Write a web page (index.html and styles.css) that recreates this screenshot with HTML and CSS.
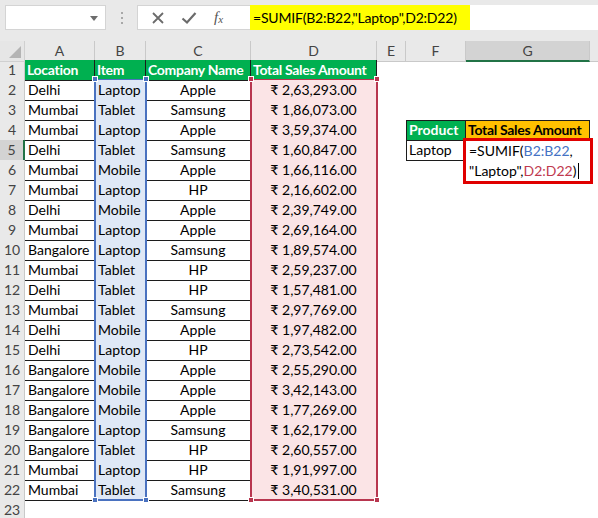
FILE: index.html
```html
<!DOCTYPE html>
<html>
<head>
<meta charset="utf-8">
<link rel="stylesheet" href="styles.css">
</head>
<body>
<div class="app">
  <div class="toolbar">
    <div class="namebox"><span class="dd"></span></div>
    <div class="dots"><i></i><i></i><i></i></div>
    <div class="fxbox">
      <svg class="ico" width="14" height="14" viewBox="0 0 14 14"><path d="M2 2 L12 12 M12 2 L2 12" stroke="#6b6b6b" stroke-width="1.8" fill="none"/></svg>
      <svg class="ico" width="16" height="14" viewBox="0 0 16 14"><path d="M1.5 7.5 L6 11.5 L14.5 2" stroke="#6b6b6b" stroke-width="2.2" fill="none"/></svg>
      <span class="fx">f<sub>x</sub></span>
    </div>
    <div class="formula">=SUMIF(B2:B22,"Laptop",D2:D22)</div>
    <div class="fill"></div>
  </div>

  <div class="sheet">
    <div class="row hdr">
      <div class="corner"><span class="tri"></span></div>
      <div class="ch">A</div><div class="ch">B</div><div class="ch">C</div><div class="ch">D</div><div class="ch">E</div><div class="ch">F</div><div class="ch sel">G</div><div class="ch last"></div>
    </div>
    <div class="row"><div class="rh">1</div><div class="c th">Location</div><div class="c th">Item</div><div class="c th">Company Name</div><div class="c th">Total Sales Amount</div><div class="e"></div><div class="e"></div><div class="e"></div><div class="e"></div></div>
    <div class="row"><div class="rh">2</div><div class="c">Delhi</div><div class="c b">Laptop</div><div class="c m">Apple</div><div class="c d">₹ 2,63,293.00</div><div class="e"></div><div class="e"></div><div class="e"></div><div class="e"></div></div>
    <div class="row"><div class="rh">3</div><div class="c">Mumbai</div><div class="c b">Tablet</div><div class="c m">Samsung</div><div class="c d">₹ 1,86,073.00</div><div class="e"></div><div class="e"></div><div class="e"></div><div class="e"></div></div>
    <div class="row"><div class="rh">4</div><div class="c">Mumbai</div><div class="c b">Laptop</div><div class="c m">Apple</div><div class="c d">₹ 3,59,374.00</div><div class="e"></div><div class="p pg">Product</div><div class="p po">Total Sales Amount</div><div class="e"></div></div>
    <div class="row"><div class="rh rsel">5</div><div class="c">Delhi</div><div class="c b">Tablet</div><div class="c m">Samsung</div><div class="c d">₹ 1,60,847.00</div><div class="e"></div><div class="p pv">Laptop</div><div class="p pv"></div><div class="e"></div></div>
    <div class="row"><div class="rh">6</div><div class="c">Mumbai</div><div class="c b">Mobile</div><div class="c m">Apple</div><div class="c d">₹ 1,66,116.00</div><div class="e"></div><div class="e"></div><div class="e"></div><div class="e"></div></div>
    <div class="row"><div class="rh">7</div><div class="c">Mumbai</div><div class="c b">Laptop</div><div class="c m">HP</div><div class="c d">₹ 2,16,602.00</div><div class="e"></div><div class="e"></div><div class="e"></div><div class="e"></div></div>
    <div class="row"><div class="rh">8</div><div class="c">Delhi</div><div class="c b">Mobile</div><div class="c m">Apple</div><div class="c d">₹ 2,39,749.00</div><div class="e"></div><div class="e"></div><div class="e"></div><div class="e"></div></div>
    <div class="row"><div class="rh">9</div><div class="c">Mumbai</div><div class="c b">Laptop</div><div class="c m">Apple</div><div class="c d">₹ 2,69,164.00</div><div class="e"></div><div class="e"></div><div class="e"></div><div class="e"></div></div>
    <div class="row"><div class="rh">10</div><div class="c">Bangalore</div><div class="c b">Laptop</div><div class="c m">Samsung</div><div class="c d">₹ 1,89,574.00</div><div class="e"></div><div class="e"></div><div class="e"></div><div class="e"></div></div>
    <div class="row"><div class="rh">11</div><div class="c">Mumbai</div><div class="c b">Tablet</div><div class="c m">HP</div><div class="c d">₹ 2,59,237.00</div><div class="e"></div><div class="e"></div><div class="e"></div><div class="e"></div></div>
    <div class="row"><div class="rh">12</div><div class="c">Delhi</div><div class="c b">Tablet</div><div class="c m">HP</div><div class="c d">₹ 1,57,481.00</div><div class="e"></div><div class="e"></div><div class="e"></div><div class="e"></div></div>
    <div class="row"><div class="rh">13</div><div class="c">Mumbai</div><div class="c b">Tablet</div><div class="c m">Samsung</div><div class="c d">₹ 2,97,769.00</div><div class="e"></div><div class="e"></div><div class="e"></div><div class="e"></div></div>
    <div class="row"><div class="rh">14</div><div class="c">Delhi</div><div class="c b">Mobile</div><div class="c m">Apple</div><div class="c d">₹ 1,97,482.00</div><div class="e"></div><div class="e"></div><div class="e"></div><div class="e"></div></div>
    <div class="row"><div class="rh">15</div><div class="c">Delhi</div><div class="c b">Laptop</div><div class="c m">HP</div><div class="c d">₹ 2,73,542.00</div><div class="e"></div><div class="e"></div><div class="e"></div><div class="e"></div></div>
    <div class="row"><div class="rh">16</div><div class="c">Bangalore</div><div class="c b">Mobile</div><div class="c m">Apple</div><div class="c d">₹ 2,55,290.00</div><div class="e"></div><div class="e"></div><div class="e"></div><div class="e"></div></div>
    <div class="row"><div class="rh">17</div><div class="c">Bangalore</div><div class="c b">Mobile</div><div class="c m">Apple</div><div class="c d">₹ 3,42,143.00</div><div class="e"></div><div class="e"></div><div class="e"></div><div class="e"></div></div>
    <div class="row"><div class="rh">18</div><div class="c">Bangalore</div><div class="c b">Mobile</div><div class="c m">Apple</div><div class="c d">₹ 1,77,269.00</div><div class="e"></div><div class="e"></div><div class="e"></div><div class="e"></div></div>
    <div class="row"><div class="rh">19</div><div class="c">Bangalore</div><div class="c b">Laptop</div><div class="c m">Samsung</div><div class="c d">₹ 1,62,179.00</div><div class="e"></div><div class="e"></div><div class="e"></div><div class="e"></div></div>
    <div class="row"><div class="rh">20</div><div class="c">Bangalore</div><div class="c b">Tablet</div><div class="c m">HP</div><div class="c d">₹ 2,60,557.00</div><div class="e"></div><div class="e"></div><div class="e"></div><div class="e"></div></div>
    <div class="row"><div class="rh">21</div><div class="c">Mumbai</div><div class="c b">Laptop</div><div class="c m">HP</div><div class="c d">₹ 1,91,997.00</div><div class="e"></div><div class="e"></div><div class="e"></div><div class="e"></div></div>
    <div class="row"><div class="rh">22</div><div class="c">Mumbai</div><div class="c b">Tablet</div><div class="c m">Samsung</div><div class="c d">₹ 3,40,531.00</div><div class="e"></div><div class="e"></div><div class="e"></div><div class="e"></div></div>
    <div class="row"><div class="rh">23</div><div class="e"></div><div class="e"></div><div class="e"></div><div class="e"></div><div class="e"></div><div class="e"></div><div class="e"></div><div class="e"></div></div>

    <div class="range rb"><i class="h tl"></i><i class="h tr"></i><i class="h bl"></i><i class="h br"></i></div>
    <div class="range rd"><i class="h tl"></i><i class="h tr"></i><i class="h bl"></i><i class="h br"></i></div>
    <div class="edit">=SUMIF(<span class="blue">B2:B22</span>,<br>"Laptop",<span class="red">D2:D22</span>)<span class="caret"></span></div>
  </div>
</div>
</body>
</html>
```
FILE: styles.css
```css
* { box-sizing: border-box; }
body { margin: 0; background: #fff; font-family: Lato, "Liberation Sans", sans-serif; font-size: 14px; color: #000; }
.app { width: 598px; height: 518px; overflow: hidden; }

.toolbar { height: 41px; background: #e9e9e9; display: flex; align-items: flex-start; padding-top: 5px; padding-left: 5px; }
.namebox { width: 101px; height: 25px; background: #fff; border: 1px solid #d4d4d4; position: relative; }
.dd { position: absolute; right: 7px; top: 10px; width: 0; height: 0; border-left: 4px solid transparent; border-right: 4px solid transparent; border-top: 5px solid #6d6d6d; }
.dots { width: 31px; height: 25px; display: flex; flex-direction: column; align-items: center; justify-content: center; gap: 3px; }
.dots i { width: 2px; height: 2px; background: #a8a8a8; display: block; }
.fxbox { width: 113px; height: 25px; background: #fff; border: 1px solid #d4d4d4; border-right: none; display: flex; align-items: center; padding-left: 13px; gap: 0; }
.fxbox .ico:nth-child(1) { margin-right: 16px; }
.fxbox .ico:nth-child(2) { margin-right: 17px; }
.fx { font-family: "Liberation Serif", serif; font-style: italic; font-size: 15px; color: #555; }
.fx sub { font-size: 11px; vertical-align: -1px; }
.formula { height: 25px; width: 220px; background: #ffff00; font-size: 14px; line-height: 25px; padding-left: 3px; white-space: nowrap; letter-spacing: -0.2px; }
.fill { flex: 1; height: 25px; background: #fff; }

.sheet { position: relative; }
.row { display: grid; grid-template-columns: 25px 70px 51px 105px 126px 29px 60px 124px 1fr; height: 20px; }
.row.hdr { height: 19px; background: #e6e6e6; }
.corner { background: #e6e6e6; border-right: 1px solid #d0d0d0; border-bottom: 1px solid #d0d0d0; position: relative; }
.tri { position: absolute; right: 3px; bottom: 3px; width: 0; height: 0; border-left: 12px solid transparent; border-bottom: 12px solid #b4b4b4; }
.ch { text-align: center; color: #444; font-size: 14px; line-height: 19px; border-right: 1px solid #c9c9c9; border-bottom: 1px solid #c9c9c9; background: #e9e9e9; }
.ch.sel { background: #d3d3d3; border-bottom: 2px solid #217346; }
.ch.last { border-right: none; }
.rh { background: #e9e9e9; color: #444; text-align: center; line-height: 20px; border-right: 1px solid #c9c9c9; border-bottom: 1px solid #d6d6d6; font-size: 14px; }
.rh.rsel { background: #d3d3d3; border-right: 2px solid #217346; }
.c { border-right: 1px solid #1c1c1c; border-bottom: 1px solid #1c1c1c; line-height: 20px; padding-left: 3px; white-space: nowrap; overflow: hidden; }
.c.th { background: #00b050; color: #fff; font-weight: bold; padding-left: 2px; letter-spacing: -0.3px; }
.c.b { background: #dfe8f6; }
.c.m { text-align: center; padding-left: 0; }
.c.d { background: #fbe4e6; text-align: center; padding-left: 0; }
.p { line-height: 20px; padding-left: 2px; white-space: nowrap; border-right: 1px solid #1c1c1c; border-bottom: 1px solid #1c1c1c; overflow: hidden; }
.pg { background: #00b050; color: #fff; font-weight: bold; border-left: 1px solid #1c1c1c; border-top: 1px solid #1c1c1c; line-height: 18px; }
.po { background: #ffc000; font-weight: bold; border-top: 1px solid #1c1c1c; line-height: 18px; letter-spacing: -0.3px; }
.row .pv:nth-child(7) { border-left: 1px solid #1c1c1c; }

.range { position: absolute; pointer-events: none; }
.rb { left: 94px; top: 38px; width: 53px; height: 422px; border: 2px solid #4a72c0; border-top-width: 1px; }
.rd { left: 250px; top: 38px; width: 128px; height: 422px; border: 2px solid #b8364f; border-top-width: 1px; }
.h { position: absolute; width: 6px; height: 6px; display: block; border: 1px solid #fff; }
.rb .h { background: #4a72c0; }
.rd .h { background: #b8364f; }
.h.tl { left: -4px; top: -4px; }
.h.tr { right: -4px; top: -4px; }
.h.bl { left: -4px; bottom: -4px; }
.h.br { right: -4px; bottom: -4px; }

.edit { position: absolute; left: 463px; top: 97px; width: 130px; height: 46px; background: #fff; border: 3px solid #e00000; font-size: 14px; line-height: 20px; padding: 0 0 0 3px; white-space: nowrap; }
.blue { color: #4472c4; }
.red { color: #c0394f; }
.caret { display: inline-block; width: 1px; height: 16px; background: #000; vertical-align: -3px; margin-left: 2px; }
```
